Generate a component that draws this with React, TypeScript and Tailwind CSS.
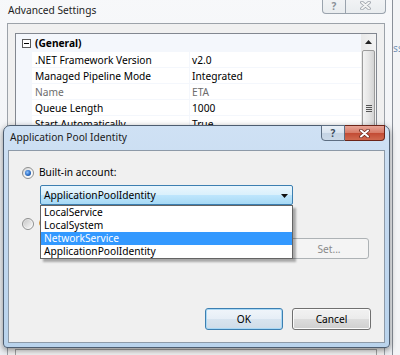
import React from "react";

const rows: { name: string; value: string; grey?: boolean }[] = [
  { name: ".NET Framework Version", value: "v2.0" },
  { name: "Managed Pipeline Mode", value: "Integrated" },
  { name: "Name", value: "ETA", grey: true },
  { name: "Queue Length", value: "1000" },
  { name: "Start Automatically", value: "True" },
  { name: "", value: "" },
  { name: "", value: "" },
  { name: "", value: "" },
  { name: "", value: "" },
  { name: "", value: "" },
  { name: "", value: "" },
  { name: "", value: "" },
  { name: "", value: "" },
  { name: "", value: "" },
];

function Radio({ checked }: { checked?: boolean }) {
  return (
    <div className="relative w-[12px] h-[12px] rounded-full border border-[#8e8f8f] bg-gradient-to-br from-[#d0d0d0] via-[#f4f4f4] to-[#ffffff] flex items-center justify-center shrink-0">
      {checked ? (
        <div className="w-[6px] h-[6px] rounded-full bg-[radial-gradient(circle_at_40%_40%,#8fc4ff_0%,#2a6cc4_55%,#1b3f7a_100%)]" />
      ) : (
        <div className="w-[8px] h-[8px] rounded-full bg-gradient-to-br from-[#c9c9c9] to-[#f7f7f7]" />
      )}
    </div>
  );
}

function XGlyph({ fill, outline }: { fill: string; outline: string }) {
  return (
    <svg width="11" height="9" viewBox="0 0 11 9">
      <path d="M2 1.5 L9 7.5 M9 1.5 L2 7.5" stroke={outline} strokeWidth="3.6" strokeLinecap="round" />
      <path d="M2 1.5 L9 7.5 M9 1.5 L2 7.5" stroke={fill} strokeWidth="2" strokeLinecap="round" />
    </svg>
  );
}

function WinButton({
  children,
  focused,
  disabled,
  className,
}: {
  children: React.ReactNode;
  focused?: boolean;
  disabled?: boolean;
  className?: string;
}) {
  if (disabled) {
    return (
      <div
        className={
          "h-[21px] rounded-[3px] border border-[#adb2b5] bg-[#f4f4f4] flex items-center justify-center text-[#8a8a8a] " +
          (className ?? "")
        }
      >
        {children}
      </div>
    );
  }
  return (
    <div
      className={
        "h-[22px] rounded-[3px] border flex items-center justify-center text-black " +
        (focused
          ? "border-[#3c7fb1] shadow-[inset_0_0_0_1px_#a9d8f5] bg-[linear-gradient(#f0f5fa_0%,#e6eef6_50%,#d8e4ef_50%,#cfdce8_100%)] "
          : "border-[#707070] shadow-[inset_0_0_0_1px_#fbfbfb] bg-[linear-gradient(#f2f2f2_0%,#ebebeb_50%,#dddddd_50%,#cfcfcf_100%)] ") +
        (className ?? "")
      }
    >
      {children}
    </div>
  );
}

export default function App() {
  return (
    <div className="relative w-[400px] h-[355px] overflow-hidden bg-[#f3f4f6] [font-family:'Noto_Sans','Segoe_UI',sans-serif] text-[10.2px] leading-[16px] text-black">
      {/* text from a window further behind */}
      <div className="absolute left-[393px] top-[40px] text-[#7391b5]">ss</div>

      {/* Background window: Advanced Settings */}
      <div className="absolute left-[-2px] top-[-10px] w-[395px] h-[380px] border border-[#8a9099] rounded-t-[6px] bg-gradient-to-b from-[#f7f8fa] to-[#eceff3] flex flex-col">
        <div className="relative h-[32px] shrink-0 pl-[9px] pt-[11px] text-[#1e1e1e]">
          Advanced Settings
          <div className="absolute right-[6px] top-0 flex h-[23px]">
            <div className="w-[24px] h-full border border-[#9aa3ad] border-t-0 rounded-bl-[4px] bg-gradient-to-b from-[#f6f7f8] to-[#e9ecef] flex items-end justify-center pb-[1px] text-[10px] leading-[11px] text-[#8a9098] font-bold">
              ?
            </div>
            <div className="w-[40px] h-full border border-[#9aa3ad] border-t-0 border-l-0 rounded-br-[4px] bg-gradient-to-b from-[#f6f7f8] to-[#e9ecef] flex items-end justify-center pb-[3px]">
              <XGlyph fill="#f4f4f4" outline="#9aa0a8" />
            </div>
          </div>
        </div>
        <div className="ml-[8px] mr-[7px] flex-1 border border-[#9ca2a9] bg-[#f0f0f0] pl-[7px] pr-[7px] pt-[9px] flex flex-col">
          <div className="h-[313px] border border-[#828790] bg-white flex">
            <div className="flex-1 flex flex-col">
              <div className="h-[18px] shrink-0 bg-[#f4f7fc] flex items-start pt-[1px]">
                <div className="w-[16px] h-[16px] flex items-center justify-center pl-[5px]">
                  <div className="w-[9px] h-[9px] border border-[#5a5a5a] bg-white flex items-center justify-center">
                    <div className="w-[5px] h-px bg-black" />
                  </div>
                </div>
                <div className="pl-[3px] font-bold leading-[16px]">(General)</div>
              </div>
              {rows.map((r, i) => (
                <div key={i} className="h-[16px] flex shrink-0">
                  <div className="w-[16px] bg-[#f4f7fc]" />
                  <div
                    className={
                      "w-[158px] pl-[3px] border-r border-b border-[#f4f7fc] leading-[16px] " +
                      (r.grey ? "text-[#6d6d6d]" : "")
                    }
                  >
                    {r.name}
                  </div>
                  <div
                    className={
                      "flex-1 pl-[2px] border-b border-[#f4f7fc] leading-[16px] " +
                      (r.grey ? "text-[#6d6d6d]" : "")
                    }
                  >
                    {r.value}
                  </div>
                </div>
              ))}
            </div>
            {/* scrollbar */}
            <div className="w-[15px] bg-gradient-to-r from-[#e9e9e9] to-[#f3f3f3] flex flex-col items-center">
              <div className="h-[15px] w-full flex items-center justify-center">
                <svg width="7" height="4" viewBox="0 0 7 4">
                  <path d="M0 4 L3.5 0 L7 4 Z" fill="#222" />
                </svg>
              </div>
              <div className="mt-px w-[13px] flex-1 rounded-[2px] border border-[#9b9b9b] bg-gradient-to-r from-[#f3f3f3] via-[#e6e6e6] to-[#d4d4d4] flex flex-col items-center pt-[54px] gap-[1px]">
                <div className="w-[6px] h-px bg-[#555]" />
                <div className="w-[6px] h-px bg-[#555]" />
                <div className="w-[6px] h-px bg-[#555]" />
                <div className="w-[6px] h-px bg-[#555]" />
              </div>
            </div>
          </div>
          <div className="mt-[3px] h-[40px] border border-[#a0a0a0] bg-[#f0f0f0]" />
        </div>
      </div>

      {/* Dialog: Application Pool Identity */}
      <div className="absolute left-[3px] top-[125px] w-[387px] h-[223px] border border-[#4d5d70] rounded-t-[7px] rounded-b-[4px] bg-gradient-to-b from-[#cfe1f4] via-[#c2d8ef] to-[#b9d3ec] shadow-[0_2px_6px_rgba(0,0,0,0.45)] flex flex-col">
        <div className="relative h-[24px] shrink-0 pl-[6px] leading-[22px] text-[#1a1a1a]">
          Application Pool Identity
          <div className="absolute right-[4px] top-[-1px] flex h-[16px]">
            <div className="w-[24px] h-full border border-[#5d6e82] rounded-bl-[4px] bg-[linear-gradient(#e9f0f7_0%,#d8e3ef_50%,#c4d3e3_50%,#cbd9e8_100%)] flex items-center justify-center text-[10px] leading-[12px] font-bold text-[#3b4a5c]">
              ?
            </div>
            <div className="w-[40px] h-full border border-l-0 border-[#6b2418] rounded-br-[4px] bg-[linear-gradient(#e8a597_0%,#d77a66_50%,#c24a33_50%,#d0694f_100%)] flex items-center justify-center">
              <XGlyph fill="#ffffff" outline="#6a2a1f" />
            </div>
          </div>
        </div>
        <div className="ml-[4px] mr-[4px] mb-[4px] flex-1 border border-[#8d9aa8] bg-[#f0f0f0] flex flex-col pl-[13px]">
          <div className="mt-[15px] h-[13px] flex items-center gap-[5px]">
            <Radio checked />
            <span className="leading-[13px]">Built-in account:</span>
          </div>
          <div className="relative mt-[6px] ml-[18px] w-[253px] h-[20px]">
            <div className="w-full h-full border border-[#3c7fb1] rounded-[2px] bg-[linear-gradient(#eaf6fd_0%,#d9f0fc_50%,#bee6fd_50%,#a7d9f5_100%)] flex items-center pl-[3px] relative">
              <span className="leading-[16px]">ApplicationPoolIdentity</span>
              <svg className="absolute right-[4px] top-[8px]" width="7" height="4" viewBox="0 0 7 4">
                <path d="M0 0 L7 0 L3.5 4 Z" fill="#111" />
              </svg>
            </div>
            <div className="absolute left-0 top-[20px] w-[253px] border border-[#646464] bg-white shadow-[3px_3px_2px_rgba(0,0,0,0.3)] z-10 flex flex-col">
              <div className="h-[13px] leading-[13px] pl-[3px]">LocalService</div>
              <div className="h-[13px] leading-[13px] pl-[3px]">LocalSystem</div>
              <div className="h-[13px] leading-[13px] pl-[3px] bg-[#3399ff] text-white">NetworkService</div>
              <div className="h-[13px] leading-[13px] pl-[3px]">ApplicationPoolIdentity</div>
            </div>
          </div>
          <div className="mt-[12px] h-[13px] flex items-center gap-[5px]">
            <Radio />
            <span className="leading-[13px]">Custom account:</span>
          </div>
          <div className="mt-[8px] ml-[18px] flex items-center gap-[6px]">
            <div className="w-[243px] h-[21px] border border-[#abadb3] bg-[#f0f0f0]" />
            <WinButton disabled className="w-[80px]">
              Set...
            </WinButton>
          </div>
          <div className="mt-auto mb-[12px] flex justify-end gap-[9px] pr-[13px]">
            <WinButton focused className="w-[78px]">
              OK
            </WinButton>
            <WinButton className="w-[79px]">Cancel</WinButton>
          </div>
        </div>
      </div>
    </div>
  );
}
